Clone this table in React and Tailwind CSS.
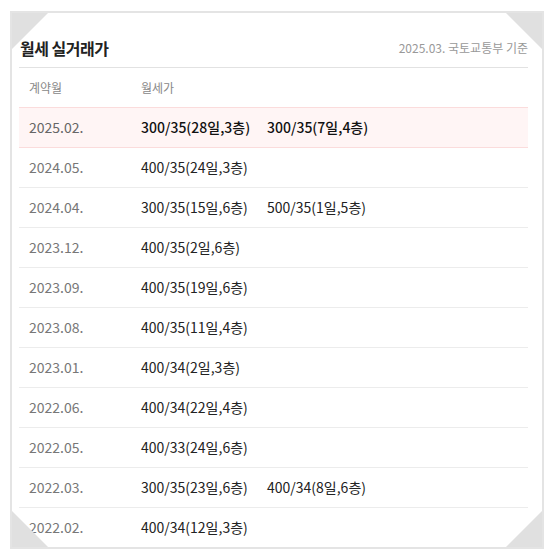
import React from 'react';

const rows = [
  { month: '2025.02.', prices: ['300/35(28일,3층)', '300/35(7일,4층)'], hot: true },
  { month: '2024.05.', prices: ['400/35(24일,3층)'] },
  { month: '2024.04.', prices: ['300/35(15일,6층)', '500/35(1일,5층)'] },
  { month: '2023.12.', prices: ['400/35(2일,6층)'] },
  { month: '2023.09.', prices: ['400/35(19일,6층)'] },
  { month: '2023.08.', prices: ['400/35(11일,4층)'] },
  { month: '2023.01.', prices: ['400/34(2일,3층)'] },
  { month: '2022.06.', prices: ['400/34(22일,4층)'] },
  { month: '2022.05.', prices: ['400/33(24일,6층)'] },
  { month: '2022.03.', prices: ['300/35(23일,6층)', '400/34(8일,6층)'] },
  { month: '2022.02.', prices: ['400/34(12일,3층)'] },
];

const App = () => {
  return (
    <div className="w-[555px] h-[560px] bg-white overflow-hidden pt-[11px] pl-[10px]" style={{ fontFamily: '"Noto Sans CJK KR", "Noto Sans", sans-serif' }}>
      <div className="relative w-[534px] h-[538px] border-2 border-[#e4e4e4] bg-white overflow-hidden pl-[7px] pr-[14px]">
        {/* folded corners */}
        <div className="absolute -top-[2px] -left-[2px] w-0 h-0 border-t-[40px] border-r-[40px] border-t-[#e0e0e0] border-r-transparent" />
        <div className="absolute -top-[2px] -right-[2px] w-0 h-0 border-t-[40px] border-l-[40px] border-t-[#e0e0e0] border-l-transparent" />
        <div className="absolute -bottom-[2px] -left-[2px] w-0 h-0 border-b-[40px] border-r-[40px] border-b-[#e0e0e0] border-r-transparent" />
        <div className="absolute -bottom-[2px] -right-[2px] w-0 h-0 border-b-[40px] border-l-[40px] border-b-[#e0e0e0] border-l-transparent" />

        <div className="flex items-center justify-between h-[55px] pt-[16px] border-b border-[#e2e2e2]">
          <h2 className="pl-px text-[16px] font-semibold text-[#222] tracking-[-0.5px]">월세 실거래가</h2>
          <span className="text-[12px] text-[#999]">2025.03. 국토교통부 기준</span>
        </div>

        <div className="flex items-center h-[39px] text-[12px] text-[#888]">
          <span className="w-[122px] pl-[10px]">계약월</span>
          <span>월세가</span>
        </div>

        {rows.map((r) => (
          <div
            key={r.month}
            className={
              r.hot
                ? 'flex items-center h-[41px] border-y border-[#fbdcdc] bg-[#fff5f5] text-[14px]'
                : 'flex items-center h-[40px] border-b border-[#ececec] text-[14px]'
            }
          >
            <span className={r.hot ? 'w-[122px] pl-[10px] text-[#666]' : 'w-[122px] pl-[10px] text-[#777]'}>{r.month}</span>
            <div className={r.hot ? 'flex text-[#111] font-medium' : 'flex text-[#222]'}>
              {r.prices.map((p, i) => (
                <span key={p} className={i === 0 && r.prices.length > 1 ? 'w-[126px]' : ''}>{p}</span>
              ))}
            </div>
          </div>
        ))}
      </div>
    </div>
  );
};

export default App;
